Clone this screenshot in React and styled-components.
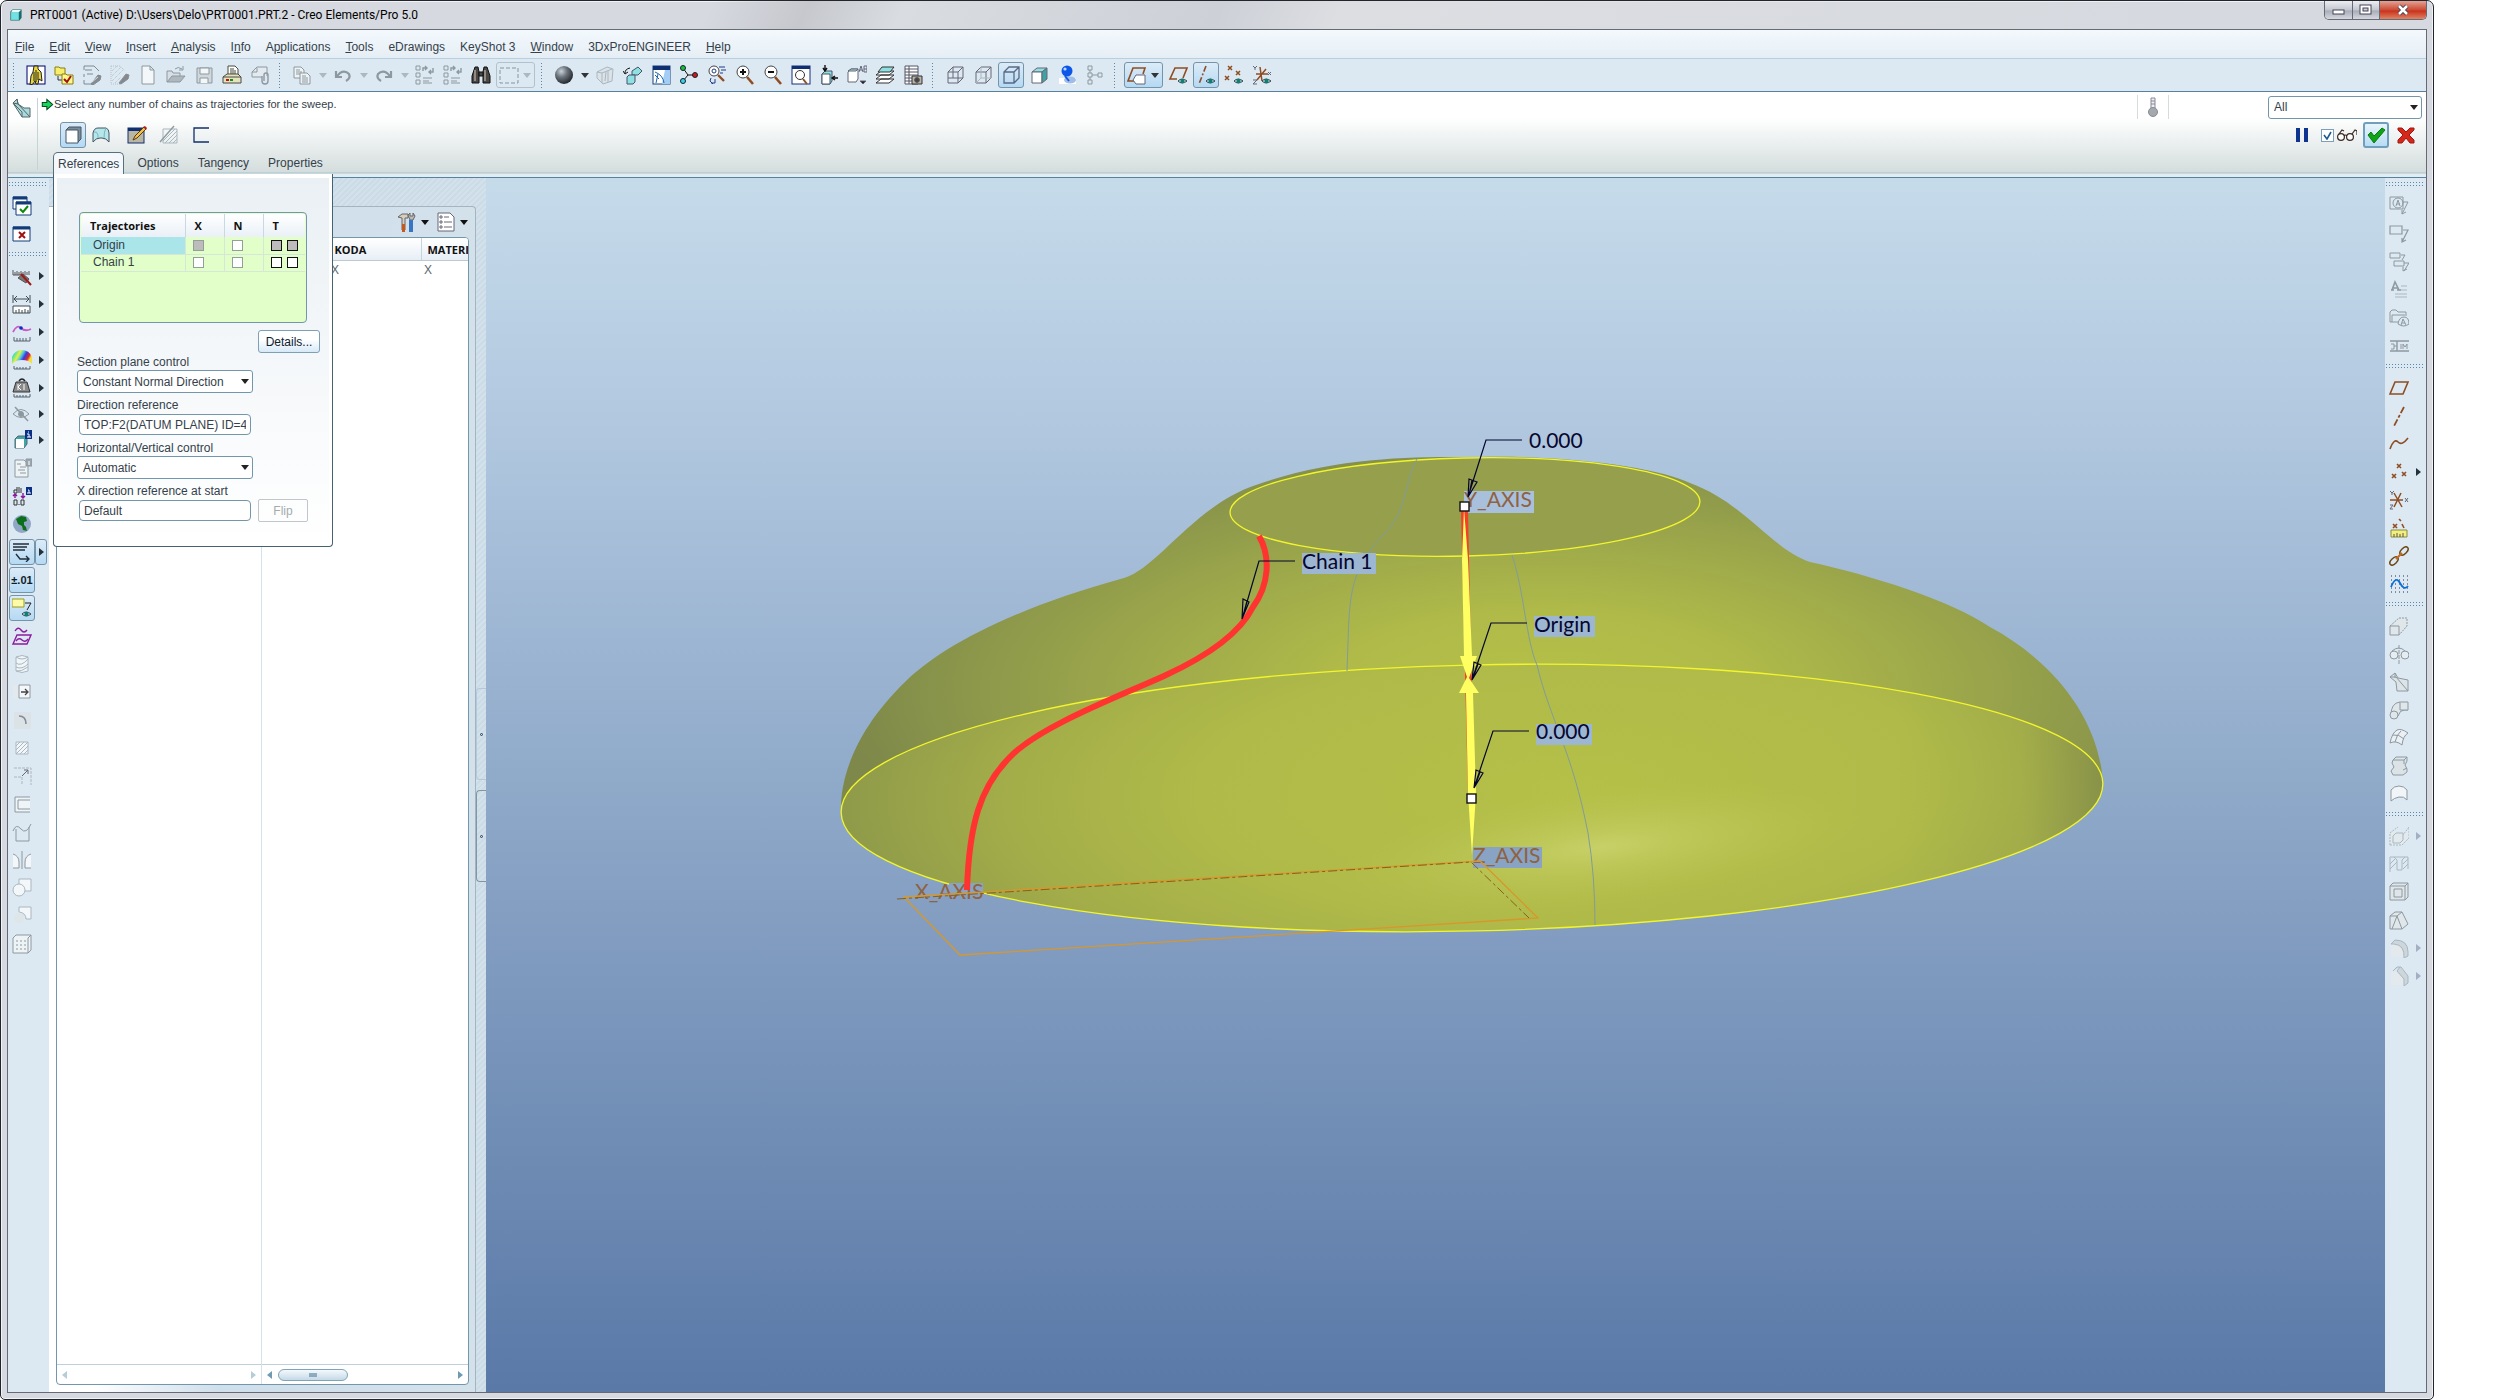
import React from 'react'
import styled, { createGlobalStyle, css } from 'styled-components'

const grey = '#8d989f'
const pale = '#a9b7c0'
const brown = '#8f4d23'
const teal = '#8fe0e2'

const eye = (
  <g>
    <path d="M10 16q4-4 9 0q-5 4-9 0z" fill="#dfe9ee" stroke="#30444c" />
    <circle cx="14.5" cy="16" r="2.2" fill="#0e7f74" />
  </g>
)

// every glyph is drawn on a 20 x 20 grid
const glyphs = {
  part: (
    <g>
      <path d="M2 5l3-3h13v12l-3 4H2z" fill="#1b6a6e" />
      <path d="M3 6h11v11H3z" fill="#73e0e2" />
      <path d="M5 3h12l-3 3H3z" fill="#e8ffff" />
    </g>
  ),
  bundle: (
    <g>
      <rect x="1" y="1" width="18" height="18" fill="#fff" stroke="#00006a" />
      <path d="M8 1h4v3l3 3 1 9-3-2-1 5h-2l-1-3-2 3-3 1 1-9 2-4z" fill="#e8d63c" stroke="#222" />
      <path d="M8 7v9M10 5v12M12 7v8" stroke="#222" />
    </g>
  ),
  folders: (
    <g stroke="#8a7d10">
      <path d="M1 2h4l1 1h5v7H1z" fill="#f7ee6b" />
      <path d="M4 11v4h4" fill="none" stroke="#333" />
      <path d="M8 9h4l1 1h6v9H8z" fill="#fff78a" />
      <path d="M10 14l3 3 4-6" fill="none" stroke="#a01010" strokeWidth="2" />
    </g>
  ),
  sheetPen: (
    <g fill="none" stroke="#7f8a92">
      <path d="M2 1h10l5 5M2 1v4M2 9v3M2 15v4h9" />
      <path d="M3 5h7M5 9h6" />
      <path d="M9 19l7-9 3 1-1 4-7 5z" fill="#868b90" />
      <path d="M10 17l6-5" stroke="#ddd" />
    </g>
  ),
  hatchPen: (
    <g fill="none" stroke="#b5c0c7">
      <path d="M1 1h9l5 5M1 1v18h9" strokeDasharray="1 1" />
      <path d="M2 6l5-5M2 11l9-9M2 16L13 5M5 18l6-6" strokeDasharray="1 1" />
      <path d="M9 18l7-9 3 1-1 4-7 5z" fill="#85898d" stroke="#858f96" />
    </g>
  ),
  blank: <path d="M4 1h8l4 4v14H4zM12 1v4h4" fill="#f3f7fa" stroke={grey} />,
  open: (
    <g stroke={grey}>
      <path d="M1 17V6h5l1 2h7v3" fill="#d7dfe4" />
      <path d="M1 17l5-6h13l-5 6z" fill="#aeb8be" />
      <path d="M9 4q3-3 7 0M17 1v4h-4" fill="none" />
    </g>
  ),
  save: (
    <g stroke={grey}>
      <path d="M3 3h15v15H3z" fill="#cfd8dd" />
      <path d="M6 3h9v6H6zM6 18v-5h8v5" fill="#f4f7f8" />
    </g>
  ),
  print: (
    <g stroke="#4b4b40">
      <path d="M6 10V1h7l3 3v6" fill="#fff" />
      <path d="M8 4h4M8 6h6M8 8h6" />
      <path d="M1 12l4-3h11l3 3v6H1z" fill="#e5e3bd" />
      <path d="M1 12h18" />
      <path d="M4 15h3" stroke="#c01010" strokeWidth="2" />
      <path d="M8 15h3" stroke="#189018" strokeWidth="2" />
    </g>
  ),
  mail: (
    <g fill="none" stroke={grey}>
      <path d="M2 12V7l5-5h10v9M2 12h10" fill="#e3ebf0" />
      <path d="M2 7h5V3" />
      <path d="M12 11v5a3 3 0 006 0v-6a2 2 0 00-4 0v6" strokeWidth="1.4" />
    </g>
  ),
  copy: (
    <g fill="#eef3f6" stroke={grey}>
      <path d="M2 2h7l3 3v8H2zM4 5h4M4 7h6M4 9h6" />
      <path d="M8 8h7l3 3v8H8zM10 11h4M10 13h6M10 15h6M10 17h6" />
    </g>
  ),
  undo: <path d="M3 6v6h6M3 12l4-4q5-3 9 1q2 4-3 7" fill="none" stroke={grey} strokeWidth="2.2" />,
  redo: <path d="M17 6v6h-6M17 12l-4-4q-5-3-9 1q-2 4 3 7" fill="none" stroke={grey} strokeWidth="2.2" />,
  regen: (
    <g fill="none" stroke={grey}>
      <path d="M1 1h4v4H1zM1 8h4v4H1zM1 15h4v4H1zM8 13h9M8 16h6M8 18h9" />
      <path d="M8 6V3h4M10 1l2 2-2 2M18 3v4h-4M16 5l-2 2 2 2" strokeWidth="1.4" />
    </g>
  ),
  find: (
    <g fill="#4a4744" stroke="#111">
      <path d="M4 2h3l1 5v11H1v-7zM16 2h-3l-1 5v11h7v-7z" />
      <path d="M8 7h4v4H8z" />
      <path d="M4 5v11M14 5v11" stroke="#d6cfc8" />
    </g>
  ),
  sphere: <circle cx="10" cy="10" r="9" fill="url(#ball)" />,
  cubeGrey: (
    <g fill="#dbe3e8" stroke={pale}>
      <path d="M2 7l10-5 6 2-1 12-9 3-6-6z" />
      <path d="M7 8l10-4M7 8v10M2 7l5 1M11 7l-1 9M13 6v11" fill="none" />
    </g>
  ),
  reorient: (
    <g>
      <path d="M9 6l6-4 4 4-4 4-6 0z" fill={teal} stroke="#456" />
      <path d="M2 8q0-4 5-5M0 6l2 3 3-2" fill="none" stroke="#111" />
      <path d="M4 12l2-2h6v7l-2 2H4z" fill={teal} stroke="#456" />
    </g>
  ),
  viewMgr: (
    <g>
      <rect x="2" y="1" width="17" height="18" fill="#fff" stroke="#16407c" />
      <path d="M2 1h17v4H2z" fill="#102f70" />
      <path d="M14 5h5v14h-8z" fill="#a3cdf4" />
      <path d="M4 7q8 3 9 11M4 10l4 4M7 9l-2 9" fill="none" stroke="#2264a8" />
    </g>
  ),
  nodes: (
    <g stroke="#123">
      <path d="M4 3l5 7-5 6M9 10h6" fill="none" stroke="#111" />
      <circle cx="4" cy="3" r="2.5" fill="#19c033" />
      <circle cx="4" cy="16" r="2.5" fill="#37d5e0" />
      <circle cx="16" cy="10" r="2.5" fill="#cf1919" />
    </g>
  ),
  layersFind: (
    <g fill="none" stroke="#1c3a86">
      <circle cx="7" cy="6" r="5" fill="#fff" stroke="#444" />
      <circle cx="7" cy="6" r="2" />
      <path d="M11 10l6 6" stroke={brown} strokeWidth="2.4" />
      <path d="M12 2h6M14 5h5M13 8h3M4 13l-1 3 3 3M8 14v4h-4" />
    </g>
  ),
  zoomIn: (
    <g fill="none" stroke="#444">
      <circle cx="8" cy="7" r="6" fill="#fff" />
      <path d="M5 7h6M8 4v6" stroke="#111" strokeWidth="2" />
      <path d="M12 12l6 7" stroke={brown} strokeWidth="2.6" />
    </g>
  ),
  zoomOut: (
    <g fill="none" stroke="#444">
      <circle cx="8" cy="7" r="6" fill="#fff" />
      <path d="M5 7h6" stroke="#111" strokeWidth="2" />
      <path d="M12 12l6 7" stroke={brown} strokeWidth="2.6" />
    </g>
  ),
  refit: (
    <g fill="none" stroke="#333">
      <rect x="1" y="1" width="18" height="18" fill="#fff" stroke="#16307c" />
      <path d="M1 1h18v3H1z" fill="#102f70" stroke="none" />
      <circle cx="9" cy="10" r="4.5" />
      <path d="M12 14l4 5" stroke={brown} strokeWidth="2" />
    </g>
  ),
  section: (
    <g stroke="#456">
      <path d="M3 9l3-3h7v10l-2 3H3z" fill={teal} />
      <path d="M3 9h8v10H3z" fill="#fff" />
      <path d="M6 0v5M4 3l2 3 2-3M19 13h-5M16 11l-3 2 3 2" fill="none" stroke="#111" strokeWidth="1.4" />
    </g>
  ),
  named: (
    <g stroke="#667">
      <path d="M1 7l3-3h7v10l-2 3H1z" fill="#fff" />
      <path d="M1 6l3-2h7l-2 2z" fill={teal} />
      <path d="M12 7l2-6 2 6M13 5h2M17 1v6h3V1zM17 4h3" fill="none" />
      <path d="M13 16h6l-3 3z" fill="#222" />
    </g>
  ),
  layers: (
    <g stroke="#333" fill="#fff">
      <path d="M1 18l5-4h13l-5 4zM1 14l5-4h13l-5 4zM1 10l5-4h13l-5 4z" />
      <path d="M3 7l4-5h12l-4 5z" fill={teal} />
    </g>
  ),
  sheet: (
    <g stroke="#556">
      <path d="M2 1h13v18H2z" fill="#fff" />
      <path d="M2 4h13M2 7h13M2 10h13M2 13h13M2 16h13M6 1v18" />
      <path d="M9 11h10v8H9z" fill="#bbb5a4" stroke="#333" />
      <circle cx="14" cy="15" r="2.4" fill="#444" />
    </g>
  ),
  wire: <path d="M3 7l5-5h10v11l-5 5H3zM3 7h10v11M13 7l5-5M8 2v11H3M8 13h10" fill="none" stroke="#667" />,
  hidden: (
    <g fill="none" stroke="#667">
      <path d="M3 7l5-5h10v11l-5 5H3zM3 7h10v11M13 7l5-5" />
      <path d="M8 2v11l-5 5M8 13h10" stroke={pale} />
    </g>
  ),
  noHidden: <path d="M3 7l5-5h10v11l-5 5H3zM3 7h10v11M13 7l5-5" fill="none" stroke="#5a6a86" strokeWidth="1.3" />,
  shaded: (
    <g stroke="#667">
      <path d="M3 7l5-4h10l-5 4z" fill={teal} />
      <path d="M3 7h10v11H3z" fill="#fff" />
      <path d="M13 7l5-4v11l-5 4z" fill="#3fa3a3" />
    </g>
  ),
  realism: (
    <g>
      <rect x="2" y="13" width="17" height="6" fill="#fff" />
      <ellipse cx="13" cy="15" rx="6" ry="3.5" fill="#9fbde6" />
      <circle cx="10" cy="6" r="5.5" fill="#0d57e8" />
      <circle cx="8" cy="4" r="1.6" fill="#bcd8ff" />
      <path d="M8 11l4 5" stroke="#0d57e8" strokeWidth="2" />
    </g>
  ),
  tree: <path d="M3 1h4v4H3zM3 8h4v4H3zM3 15h4v4H3zM13 8h4v4h-4zM7 10h6M5 5v3M5 12v3" fill="none" stroke={grey} />,
  planeTag: (
    <g fill="none" stroke={brown} strokeWidth="1.6">
      <path d="M9 16H1L6 3h12l-2 6" />
      <path d="M9 10h9v9H9l-3-4z" fill="#fff" stroke="#667" strokeWidth="1" />
    </g>
  ),
  planeEye: (
    <g>
      <path d="M9 14H2L7 3h12l-4 10" fill="none" stroke={brown} strokeWidth="1.6" />
      {eye}
    </g>
  ),
  axisEye: (
    <g>
      <path d="M10 1L3 19" stroke={brown} strokeWidth="1.6" strokeDasharray="6 2 2 2" />
      {eye}
    </g>
  ),
  pointEye: (
    <g>
      <path d="M4 1l4 4M8 1L4 5M1 11l4 4M5 11l-4 4M12 6l4 4M16 6l-4 4" stroke={brown} strokeWidth="1.5" />
      {eye}
    </g>
  ),
  csysEye: (
    <g>
      <path d="M8 2l2 14M14 4L5 15M4 9h12" stroke={brown} strokeWidth="1.5" />
      <path d="M1 1l2 2 2-2M3 3v2M16 7l3 3M19 7l-3 3M1 15h4l-4 4h4" fill="none" stroke="#667" />
      {eye}
    </g>
  ),
  sweep: (
    <g stroke="#566">
      <path d="M1 5l4-4 1 5 6 4h6v9h-8z" fill="#a9d9dc" />
      <path d="M5 1l1 5-5-1 9 9v5M6 6l12 13" fill="none" />
    </g>
  ),
  solid: (
    <g stroke="#456">
      <path d="M3 5l3-3h12v12l-3 3z" fill="#7b8f99" />
      <path d="M3 5h12v13H3z" fill="#fff" />
    </g>
  ),
  surface: (
    <g stroke="#456">
      <path d="M2 17V8q1-5 5-5h8q3 1 3 5v9q-3-4-7-4H9q-4 0-7 4z" fill="#b4e6ea" />
      <path d="M3 7q3-1 4 3v3M15 3q-2 3-2 10" fill="none" stroke="#7fb6bc" />
    </g>
  ),
  sketch: (
    <g>
      <rect x="1" y="3" width="16" height="15" fill="#b9b6a4" stroke="#102f70" />
      <path d="M1 3h16v3H1z" fill="#102f70" />
      <path d="M6 15l2-4 9-9 2 2-9 9z" fill="#f0c04a" stroke="#5a3a10" />
      <path d="M16 2l2-1 2 2-1 2z" fill="#b02020" />
    </g>
  ),
  removeMat: (
    <g fill="none" stroke={pale}>
      <path d="M4 4h14v14H4zM6 18L18 6M10 18l8-8M14 18l4-4M4 16L16 4" />
      <path d="M1 17L15 1" stroke={grey} strokeWidth="1.4" />
    </g>
  ),
  thin: <path d="M18 3H3v14h15" fill="none" stroke="#12306a" strokeWidth="1.3" />,
  winOk: (
    <g stroke="#123a78">
      <path d="M1 1h14v12H1z" fill="#fff" />
      <path d="M1 2h14" strokeWidth="3" />
      <path d="M4 6h15v13H4z" fill="#fff" />
      <path d="M4 7h15" strokeWidth="3" />
      <path d="M8 13l3 3 5-6" fill="none" stroke="#0a8a0a" strokeWidth="2" />
    </g>
  ),
  winClose: (
    <g stroke="#123a78">
      <path d="M1 3h17v14H1z" fill="#fff" />
      <path d="M1 4h17" strokeWidth="3" />
      <path d="M7 8l6 6M13 8l-6 6" stroke="#a01010" strokeWidth="2" />
    </g>
  ),
  measurePen: (
    <g fill="none" stroke="#555">
      <path d="M1 4v5h10M3 6v3M5 5v4M7 6v3M9 5v4M11 6v3M13 5v4M15 6v3M17 5v4" />
      <path d="M6 12l5-4 6 5-3 4z" fill="#777" />
      <path d="M9 8l10 11" stroke="#a01818" strokeWidth="2" />
    </g>
  ),
  distance: (
    <g fill="none" stroke="#3d4a52">
      <path d="M1 1v8M18 1v8M2 5h15M5 2L2 5l3 3M14 2l3 3-3 3" />
      <path d="M1 12h17v7H1z" fill="#fff" />
      <path d="M4 19v-3M7 19v-4M10 19v-3M13 19v-4M16 19v-3" />
    </g>
  ),
  curvature: (
    <g fill="none">
      <path d="M1 10q4-8 8-4t10 1" stroke="#c95bc6" strokeWidth="1.8" />
      <circle cx="9" cy="6" r="1.8" fill="#0b2fc8" />
      <path d="M2 15v4h16v-4M5 19v-3M8 19v-3M11 19v-3M14 19v-3" stroke="#56636b" />
    </g>
  ),
  rainbow: (
    <g>
      <path d="M0 14V7q3-7 10-7t10 7v7q-3-4-10-4T0 14z" fill="url(#hues)" />
      <path d="M2 16v3h16v-3M5 19v-2M8 19v-2M11 19v-2M14 19v-2" fill="none" stroke="#56636b" />
    </g>
  ),
  weight: (
    <g>
      <path d="M7 3q3-4 6 0" fill="none" stroke="#222" strokeWidth="1.6" />
      <path d="M4 4h11l3 10H1z" fill="#8b8b8b" stroke="#333" />
      <path d="M6 6v6M9 6L6 9l3 3M12 6v6" fill="none" stroke="#fff" />
      <path d="M2 16v3h16v-3M5 19v-2M8 19v-2M11 19v-2M14 19v-2" fill="none" stroke="#56636b" />
    </g>
  ),
  eyeOff: (
    <g fill="none" stroke={grey}>
      <path d="M1 10q8-9 16 0q-8 7-16 0z" />
      <circle cx="9" cy="10" r="2.5" fill={grey} />
      <path d="M3 3l13 14" strokeWidth="1.5" />
    </g>
  ),
  featInfo: (
    <g>
      <path d="M3 9l3-3h9v8l-3 4H3z" fill="#3fa6a6" stroke="#567" />
      <path d="M4 9h8v9H4z" fill="#fff" />
      <path d="M13 0h7v9h-7z" fill="#0a2f86" />
      <path d="M16 2h1M15 4h2v3M15 7h4" fill="none" stroke="#fff" />
    </g>
  ),
  docInfo: (
    <g fill="none" stroke={grey}>
      <path d="M3 2h9l4 4v13H3zM5 6h4M8 9h6M6 12h7M8 15h6" fill="#eef3f6" />
      <path d="M14 1h6v7h-6z" fill="#9aa6ae" />
      <path d="M17 3v4" stroke="#fff" />
    </g>
  ),
  relInfo: (
    <g fill="none" stroke="#333">
      <path d="M5 1v6H2V4h3M7 1v6M9 2v5" />
      <path d="M3 12V8M1 10l2-2 2 2M11 7v5M9 10l2 2 2-2" stroke="#8a149a" strokeWidth="1.4" />
      <path d="M2 14h3v5H2zM9 14h3v5H9zM7 18v1" />
      <path d="M14 1h6v8h-6z" fill="#0a2f86" stroke="none" />
      <path d="M16 4h1v3M15 7h4" stroke="#fff" />
    </g>
  ),
  globe: (
    <g>
      <circle cx="10" cy="10" r="9" fill="#8fa7c4" />
      <path d="M4 5l5-3 5 1 1 4-3 1v3l2 2 1 4-4-1-1-4-4-2z" fill="#0c6f1b" />
    </g>
  ),
  note: <path d="M1 2h16M1 5h14M1 8h12M4 12l4 5h8M14 14l3 3-3 3" fill="none" stroke="#222f3a" strokeWidth="1.4" />,
  tagEye: (
    <g>
      <path d="M0 1h12v8H0z" fill="#fbfba8" stroke="#9a9a20" />
      <path d="M13 5h6l-4 7" fill="none" stroke="#222" />
      {eye}
    </g>
  ),
  wrap: (
    <g fill="none" stroke="#8d1ba0" strokeWidth="1.4">
      <path d="M3 5q3-5 6-1t6 0" />
      <path d="M1 18l4-9h14l-4 9z" />
      <path d="M4 15q3-4 6-1t6-1" />
    </g>
  ),
  coil: (
    <g fill="#f0f5f8" stroke={pale}>
      <path d="M4 3q6-3 12 0v14q-6 3-12 0z" />
      <path d="M4 3q6 4 12 0M4 9q5 4 12-4M4 13q6 3 12-3M4 17q5 1 12-4" fill="none" />
    </g>
  ),
  shift: (
    <g>
      <path d="M1 3h7v13H1z" fill="#e3e9ec" />
      <path d="M7 3h11v13H7z" fill="#f4f8fa" stroke={grey} />
      <path d="M9 10h6M13 7l3 3-3 3" fill="none" stroke="#444" strokeWidth="1.3" />
    </g>
  ),
  arc: (
    <g>
      <path d="M2 2h17v17H2z" fill="#dbe3e7" />
      <path d="M7 6q7 0 7 8" fill="none" stroke="#889" strokeWidth="1.6" />
    </g>
  ),
  hatch: <path d="M4 4h12v12H4zM4 8l4-4M4 12l8-8M4 16L16 4M8 16l8-8M12 16l4-4" fill="#f3f7f9" stroke={pale} />,
  extend: (
    <g fill="none" stroke={pale}>
      <path d="M2 2h17v17M2 11h8v8" strokeDasharray="3 1" />
      <path d="M10 10l6-6M12 4h4v4" stroke="#667" />
    </g>
  ),
  offset: <path d="M18 3H3v15h15M18 6H6v9h12" fill="#eef4f7" stroke={grey} />,
  patch: <path d="M1 9q3-8 8-2t10-5M4 7v12h13V5" fill="none" stroke={grey} />,
  mirror: <path d="M10 1v18M1 4q6 2 6 8v6H1M19 4q-6 2-6 8v6h6" fill="#f3f7f9" stroke={grey} />,
  union: (
    <g fill="#f3f7f9" stroke={pale}>
      <path d="M7 1h12v12H7z" />
      <circle cx="7" cy="12" r="6" />
    </g>
  ),
  subtract: (
    <g fill="#f3f7f9" stroke={pale}>
      <path d="M7 1h12v12h-5q0-6-7-7z" />
      <circle cx="7" cy="12" r="5.5" fill="#dfe6ea" stroke="none" />
    </g>
  ),
  pattern: (
    <g fill="#eef3f6" stroke={grey}>
      <path d="M1 4l3-3h15v15l-3 3H1zM16 4v15M16 4l3-3" />
      <path d="M4 7h11M4 11h11M4 15h11" strokeDasharray="2 2" />
    </g>
  ),
  balloonNote: (
    <g fill="none" stroke={grey}>
      <path d="M1 1h13v12H1z" />
      <circle cx="9" cy="7" r="5" />
      <path d="M7 10l2-6 2 6M8 8h3M14 6h5l-6 12M13 14v4l4-2" />
    </g>
  ),
  boxNote: <path d="M1 2h12v8H1zM14 6h5l-6 12M13 14v4l4-2" fill="none" stroke={grey} strokeWidth="1.2" />,
  twoNote: <path d="M1 1h10v5H1zM12 3h4l-3 5M5 9h10v5H5zM15 11h5l-5 8M14 15v4l4-2" fill="none" stroke={grey} />,
  textA: (
    <g fill="none" stroke={grey}>
      <path d="M3 10l3-8 4 8M4 8h5M2 10h3M8 10h4" strokeWidth="1.6" />
      <path d="M12 6h6M12 10h6M6 14h12M6 17h12" stroke={pale} />
    </g>
  ),
  folderA: (
    <g fill="none" stroke={grey}>
      <path d="M1 14V4l2-2h4l2 2h8v4M1 14h8M3 14V7h13" />
      <path d="M9 16q1-7 6-7t5 7q-5 4-11 0z" fill="#dce9f3" />
      <path d="M12 17l2-6 3 6M13 15h3" />
    </g>
  ),
  tolerance: (
    <g fill="none" stroke={grey}>
      <path d="M1 5h19M1 15h19M8 5v10" strokeWidth="1.4" />
      <path d="M2 8h3v5H2M5 10h3M12 8v5M14 13V8l2 3 2-3v5" />
    </g>
  ),
  plane: <path d="M1 16L6 4h13l-5 12z" fill="none" stroke={brown} strokeWidth="1.6" />,
  axis: <path d="M15 1L5 20" fill="none" stroke={brown} strokeWidth="1.8" strokeDasharray="7 2 3 2" />,
  curve: <path d="M1 15q4-11 8-7t10-4" fill="none" stroke={brown} strokeWidth="1.6" />,
  points: <path d="M8 2l4 4M12 2L8 6M3 12l4 4M7 12l-4 4M13 10l4 4M17 10l-4 4" stroke={brown} strokeWidth="1.6" />,
  csys: (
    <g fill="none">
      <path d="M1 10h13M5 3l8 14M12 3L5 17" stroke={brown} strokeWidth="1.5" />
      <path d="M1 1l2 2 2-2M3 3v2M16 8l3 4M19 8l-3 4M1 15h3l-3 4h3" stroke="#667" />
    </g>
  ),
  refMeasure: (
    <g fill="none">
      <path d="M4 6l4 4M8 6l-4 4M10 1l2 2M13 6l2 4" stroke={brown} strokeWidth="1.6" />
      <path d="M2 12h16v7H2z" fill="#f3ef7c" stroke="#8c8a3a" />
      <path d="M5 19v-3M8 19v-4M11 19v-3M14 19v-4" stroke="#555" />
    </g>
  ),
  chain: (
    <g fill="none" stroke="#6d4a14" strokeWidth="1.5">
      <ellipse cx="5" cy="15" rx="5" ry="2.8" transform="rotate(-45 5 15)" />
      <ellipse cx="15" cy="5" rx="5" ry="2.8" transform="rotate(-45 15 5)" />
      <path d="M7 13l6-6" stroke="#c46a1c" strokeWidth="2" />
    </g>
  ),
  spline: (
    <g fill="none">
      <path d="M2 2h17M2 6h17M2 10h17M2 14h17M2 18h17" stroke="#234" strokeDasharray="1 3" />
      <path d="M2 13q5-12 9-4t8 3" stroke="#0a6fd8" strokeWidth="1.8" />
    </g>
  ),
  extrude: (
    <g fill="#e0e7ea" stroke={grey}>
      <path d="M1 10L10 2h8v8l-8 9" strokeDasharray="2 1" />
      <path d="M1 10h9v9H1z" />
    </g>
  ),
  revolve: (
    <g fill="#e6edf0" stroke={grey}>
      <circle cx="5" cy="11" r="4" />
      <circle cx="16" cy="11" r="4" />
      <path d="M10 1v19" strokeDasharray="4 1" />
      <path d="M3 7q7-6 13 0" fill="none" />
    </g>
  ),
  varSweep: <path d="M1 5l5-4 3 5 10 2v11H8l-1-9zM1 5h6l12 14M6 1v5" fill="#dde4e7" stroke={grey} />,
  swept: (
    <g fill="#e0e7ea" stroke={grey}>
      <path d="M2 15q0-12 9-13h8v8h-4q-4 0-6 6z" />
      <path d="M11 2v8h8" />
      <circle cx="5" cy="15" r="4" />
    </g>
  ),
  boundary: <path d="M1 15q2-10 7-13 4-2 11 3-5 3-6 12-6-5-12-2zM4 7q6-1 11 4M12 3q-4 3-6 11" fill="#eaf0f3" stroke={grey} />,
  blend: <path d="M4 4l3-3h11v4l-2 4 2 4v3l-4 3H4l-2-4 3-4-2-4zM4 4h11l3-3M15 4v4M14 14l4-2" fill="#dce3e7" stroke={grey} />,
  style: <path d="M2 17V6q3-4 8-4t8 4v10q-3-4-8-3t-8 4z" fill="#f1f5f8" stroke={grey} />,
  rib: (
    <g fill="#e3eaed" stroke={pale}>
      <path d="M1 19V7l8-6M1 19h12l7-7V1l-6 8" strokeDasharray="2 1" />
      <path d="M4 10l3-3h7v7l-3 3H4z" />
    </g>
  ),
  hole: <path d="M1 3h18M1 3v15M5 3l3 3v10h5V6l3-3M1 10l5-5M1 15l7-7M14 15l5-5M14 10l5-5M19 3v12" fill="none" stroke={pale} />,
  shell: <path d="M1 4l3-3h15v14l-3 3H1zM16 4v14M16 4l3-3M1 4h15M5 7h8v8H5z" fill="#dfe6ea" stroke={grey} />,
  draft: <path d="M1 19V6l5-4h7l6 12-6 5zM1 6h7l5 13M8 6l5-4M8 6L3 19" fill="#e0e7ea" stroke={grey} />,
  round: (
    <g stroke={pale}>
      <path d="M2 6h5q9 1 8 13H2z" fill="#e3e9ec" stroke="none" />
      <path d="M2 6l4-4q13 0 13 12v4l-4 2q1-13-10-14z" fill="#ccd6db" />
    </g>
  ),
  chamfer: (
    <g stroke={pale}>
      <path d="M2 6h6l7 7v6H2z" fill="#e3e9ec" stroke="none" />
      <path d="M4 5l4-4h4l7 9v7l-4 3v-7L8 5l3-4" fill="#ccd6db" />
    </g>
  ),
  tools: (
    <g>
      <path d="M1 5l4-3h6v4H8v12H5V6z" fill="#d7cdbd" stroke="#666" />
      <path d="M5 12h3v8H5z" fill="#c9581d" />
      <path d="M13 8l-2-5 2-2v3h3V1l2 3-2 4z" fill="#bbb" stroke="#666" />
      <path d="M12 8h4v12h-4z" fill="#3776c4" />
    </g>
  ),
  list: (
    <g stroke="#667">
      <path d="M2 1h12l4 4v14H2z" fill="#fff" />
      <path d="M8 5h5M8 10h8M8 15h8" />
      <path d="M4 4h2v2H4zM4 9h2v2H4zM4 14h2v2H4z" fill="none" />
    </g>
  ),
  gauge: (
    <g stroke="#889">
      <path d="M8 1h4v11H8z" fill="#eee" />
      <path d="M8 4h4M8 7h4" />
      <circle cx="10" cy="15" r="4.5" fill="#a4a9ac" />
    </g>
  ),
  pause: <path d="M4 3h4v14H4zM12 3h4v14h-4z" fill="#0d3590" />,
  glasses: (
    <g fill="none" stroke="#3a2a22" strokeWidth="1.2">
      <circle cx="4" cy="12" r="3.4" fill="#fff" />
      <circle cx="13" cy="12" r="3.4" fill="#fff" />
      <path d="M7 11q1-2 3 0M2 9l3-4 2 1M15 9l3-4 2 1v4" />
    </g>
  ),
  accept: <path d="M2 10l3-3 3 4 8-8 3 2L8 18z" fill="#0fa316" stroke="#0a7a10" />,
  reject: <path d="M2 3h4l4 4 4-4h4v2l-5 5 5 5v3h-4l-4-5-4 5H2v-3l5-5-5-5z" fill="#d5281b" stroke="#a11810" />,
  arrow: <path d="M2 7h7V2l9 8-9 8v-5H2z" fill="#19d45f" stroke="#064d1f" strokeWidth="1.6" />
}

const Icon = ({ name, size = 20 }) => (
  <svg width={size} height={size} viewBox="0 0 20 20" aria-hidden="true">
    {glyphs[name]}
  </svg>
)

const menus = [
  ['', 'F', 'ile'],
  ['', 'E', 'dit'],
  ['', 'V', 'iew'],
  ['', 'I', 'nsert'],
  ['', 'A', 'nalysis'],
  ['I', 'n', 'fo'],
  ['A', 'p', 'plications'],
  ['', 'T', 'ools'],
  ['eDrawin', 'g', 's'],
  ['KeyShot 3', '', ''],
  ['', 'W', 'indow'],
  ['3DxProENGINEER', '', ''],
  ['', 'H', 'elp']
]

// '|' is a grip, '>' a drop-down arrow that follows its button
const toolbar = [
  '|', 'bundle', 'folders', 'sheetPen', 'hatchPen', 'blank', 'open', 'save', 'print', 'mail',
  '|', 'copy', '>', 'undo', '>', 'redo', '>', 'regen', 'regen', 'find', 'select',
  '|', 'sphere', '>dark', 'cubeGrey', 'reorient', 'viewMgr', 'nodes', 'layersFind', 'zoomIn', 'zoomOut',
  'refit', 'section', 'named', 'layers', 'sheet',
  '|', 'wire', 'hidden', '*noHidden', 'shaded', 'realism', 'tree',
  '|', 'split', 'planeEye', '*axisEye', 'pointEye', 'csysEye'
]

const leftTools = [
  '|', 'winOk', 'winClose', '|',
  'measurePen>', 'distance>', 'curvature>', 'rainbow>', 'weight>', 'eyeOff>', 'featInfo>',
  'docInfo', 'relInfo', 'globe', '*note>', '*tol', '*tagEye', 'wrap', 'coil', 'shift', 'arc',
  'hatch', 'extend', 'offset', 'patch', 'mirror', 'union', 'subtract', 'pattern'
]

const rightTools = [
  '|', 'balloonNote', 'boxNote', 'twoNote', 'textA', 'folderA', 'tolerance', '|',
  'plane', 'axis', 'curve', 'points>', 'csys', 'refMeasure', 'chain', 'spline', '|',
  'extrude', 'revolve', 'varSweep', 'swept', 'boundary', 'blend', 'style', '|',
  'rib>', 'hole', 'shell', 'draft', 'round>', 'chamfer>'
]

const TopTool = ({ item }) => {
  if (item === '|') return <Grip />
  if (item[0] === '>')
    return (
      <Drop aria-label="More">
        <Caret $color={item === '>dark' ? '#333' : '#a9b8c2'} />
      </Drop>
    )
  if (item === 'select')
    return (
      <Split aria-label="Selection box">
        <svg width="20" height="20" viewBox="0 0 20 20">
          <rect x="1" y="3" width="18" height="15" fill="none" stroke="#8496a2" strokeDasharray="4 2" />
        </svg>
        <Caret $color="#a9b8c2" />
      </Split>
    )
  if (item === 'split')
    return (
      <Split $on aria-label="Plane tags">
        <Icon name="planeTag" />
        <Caret $color="#333" />
      </Split>
    )
  const name = item.replace('*', '')
  return (
    <Tool $on={item[0] === '*'} aria-label={name}>
      <Icon name={name} />
    </Tool>
  )
}

const SideTool = ({ item, right }) => {
  if (item === '|') return <SideGrip />
  const on = item[0] === '*'
  const more = item.endsWith('>')
  const name = item.replace(/[*>]/g, '')
  const faded = right && name !== 'points'
  return (
    <SideRow $short={name === 'eyeOff'}>
      <Tool $on={on} aria-label={name}>
        {name === 'tol' ? <Tol>±.01</Tol> : <Icon name={name} />}
      </Tool>
      {more && (
        <More $on={on} aria-label={`${name} options`}>
          <Side $color={faded ? '#a3afc2' : '#24303a'} />
        </More>
      )}
    </SideRow>
  )
}

const Scene = () => (
  <SceneSvg viewBox="486 178 1899 1214" role="img" aria-label="Swept surface model">
    <defs>
      <radialGradient id="outer" gradientUnits="userSpaceOnUse" cx="0" cy="0" r="1" gradientTransform="translate(1540 690) scale(700 262)">
        <stop offset="0" stopColor="#b6c148" />
        <stop offset=".3" stopColor="#afba49" />
        <stop offset=".6" stopColor="#9ca74b" />
        <stop offset=".82" stopColor="#8c974b" />
        <stop offset="1" stopColor="#7d884a" />
      </radialGradient>
      <radialGradient id="inner" gradientUnits="userSpaceOnUse" cx="0" cy="0" r="1" gradientTransform="translate(1570 790) scale(740 270)">
        <stop offset="0" stopColor="#b5c048" />
        <stop offset=".5" stopColor="#afba49" />
        <stop offset=".75" stopColor="#a4ae49" />
        <stop offset="1" stopColor="#8e994a" />
      </radialGradient>
      <linearGradient id="rightFade" gradientUnits="userSpaceOnUse" x1="1900" y1="0" x2="2103" y2="0">
        <stop offset="0" stopColor="#8b964a" stopOpacity="0" />
        <stop offset=".6" stopColor="#8b964a" stopOpacity=".2" />
        <stop offset="1" stopColor="#858f49" stopOpacity=".9" />
      </linearGradient>
      <radialGradient id="glow" gradientUnits="userSpaceOnUse" cx="0" cy="0" r="1" gradientTransform="translate(1600 850) rotate(-5) scale(270 62)">
        <stop offset="0" stopColor="#ccd56f" stopOpacity=".8" />
        <stop offset=".5" stopColor="#c3cc5e" stopOpacity=".4" />
        <stop offset="1" stopColor="#b9c44b" stopOpacity="0" />
      </radialGradient>
    </defs>
    <path
      d="M841 812C840 785 850 735 906 681C936 652 1000 612 1124 578C1158 568 1195 505 1256 485C1340 455 1420 457 1480 457C1570 455 1660 468 1690 483C1745 503 1770 548 1810 562C1870 575 1950 600 1990 627C2060 665 2100 725 2103 784C2000 900 1000 900 841 812z"
      fill="url(#outer)"
    />
    <ellipse cx="1472" cy="798" rx="631" ry="133" transform="rotate(-1.33 1472 798)" fill="url(#inner)" />
    <ellipse cx="1472" cy="798" rx="631" ry="133" transform="rotate(-1.33 1472 798)" fill="url(#rightFade)" />
    <ellipse cx="1472" cy="798" rx="631" ry="133" transform="rotate(-1.33 1472 798)" fill="url(#glow)" stroke="#f2f52e" strokeWidth="1.3" />
    <ellipse cx="1465" cy="507" rx="235" ry="49" transform="rotate(-1.35 1465 507)" fill="#959f4c" stroke="#f2f52e" strokeWidth="1.3" />
    <g fill="none" stroke="#829c9a">
      <path d="M1417 459C1405 480 1408 505 1388 530C1345 572 1350 600 1347 671" />
      <path d="M1512 555C1524 590 1526 640 1537 665C1550 720 1572 750 1588 833Q1595 875 1595 925" />
    </g>
    <g fontSize="21">
      <rect x="1464" y="491" width="70" height="22" fill="#a8c0dc" />
      <rect x="1473" y="847" width="69" height="21" fill="#88a3c4" />
      <rect x="949" y="883" width="34" height="10" fill="#88a3c4" />
      <g fill="#8f6240">
        <text x="1464" y="507">Y_AXIS</text>
        <text x="1473" y="863">Z_AXIS</text>
        <text x="915" y="899">X_AXIS</text>
      </g>
    </g>
    <g fill="none">
      <path d="M904 897L1480 861L1538 918L960 955z" stroke="#d8972c" strokeWidth="1.3" />
      <path d="M897 899L1471 862L1529 918" stroke="#86601e" strokeDasharray="9 3 3 3" />
      <path
        d="M1259 536C1271 557 1269 585 1253 607C1238 637 1199 660 1164 676C1120 696 1040 726 1010 757C980 787 969 825 967 890"
        stroke="#ff3430"
        strokeWidth="6"
      />
    </g>
    <path d="M1461 510h7L1474 796h-6z" fill="#f2402a" />
    <path d="M1464 508L1462 560L1464 656h-4L1467 677L1459 693h7L1468 794L1472 855L1476 794L1473 693h6L1469 678L1477 656h-5L1468 560z" fill="#ffff62" />
    <g fill="#fff" stroke="#111" strokeWidth="1.4">
      <rect x="1460" y="502" width="9" height="9" />
      <rect x="1467" y="794" width="9" height="9" />
    </g>
    <g fill="none" stroke="#05052c" strokeWidth="1.2">
      <path d="M1522 440h-36L1468 497M1477 482l-8-3-1 18zM1472 480l-3 15" />
      <path d="M1295 561h-36L1242 619M1249 602l-6-3-1 20zM1247 601l-4 15" />
      <path d="M1527 623h-36L1472 680M1481 665l-7-3-2 18zM1478 664l-5 14" />
      <path d="M1529 731h-36L1474 788M1483 773l-7-3-2 18zM1480 772l-5 14" />
    </g>
    <g fill="#9db6d2">
      <rect x="1302" y="553" width="74" height="21" />
      <rect x="1534" y="616" width="61" height="21" />
      <rect x="1536" y="724" width="56" height="21" />
    </g>
    <g fontSize="21" fill="#06062e">
      <text x="1529" y="448">0.000</text>
      <text x="1302" y="569">Chain 1</text>
      <text x="1534" y="632">Origin</text>
      <text x="1536" y="739">0.000</text>
    </g>
  </SceneSvg>
)

const ReferencesPopup = () => (
  <Popup>
    <PopupBody>
      <TrajFrame>
        <TrajTable>
          <thead>
            <tr>
              <th>Trajectories</th>
              <th>X</th>
              <th>N</th>
              <th>T</th>
            </tr>
          </thead>
          <tbody>
            <tr>
              <TrajName $on>Origin</TrajName>
              <td><Box $grey disabled aria-label="Origin X" /></td>
              <td><Box aria-label="Origin N" /></td>
              <td>
                <Pair>
                  <Box $grey $dark aria-label="Origin T start" />
                  <Box $grey $dark aria-label="Origin T end" />
                </Pair>
              </td>
            </tr>
            <tr>
              <TrajName>Chain 1</TrajName>
              <td><Box aria-label="Chain 1 X" /></td>
              <td><Box aria-label="Chain 1 N" /></td>
              <td>
                <Pair>
                  <Box $dark aria-label="Chain 1 T start" />
                  <Box $dark aria-label="Chain 1 T end" />
                </Pair>
              </td>
            </tr>
          </tbody>
        </TrajTable>
      </TrajFrame>
      <Details>Details...</Details>
      <Fields>
        <Field>
          <label htmlFor="plane">Section plane control</label>
          <SelectWrap>
            <select id="plane"><option>Constant Normal Direction</option></select>
            <Caret $color="#222" />
          </SelectWrap>
        </Field>
        <Field>
          <label htmlFor="direction">Direction reference</label>
          <Collector id="direction" defaultValue="TOP:F2(DATUM PLANE) ID=4" />
        </Field>
        <Field>
          <label htmlFor="hv">Horizontal/Vertical control</label>
          <SelectWrap>
            <select id="hv"><option>Automatic</option></select>
            <Caret $color="#222" />
          </SelectWrap>
        </Field>
        <Field>
          <label htmlFor="start">X direction reference at start</label>
          <FlipRow>
            <Collector id="start" defaultValue="Default" />
            <Flip disabled>Flip</Flip>
          </FlipRow>
        </Field>
      </Fields>
    </PopupBody>
  </Popup>
)

const Dashboard = () => (
  <Dash>
    <DashLeft>
      <Icon name="sweep" />
    </DashLeft>
    <DashMain>
      <Message>
        <Icon name="arrow" size={13} />
        Select any number of chains as trajectories for the sweep.
      </Message>
      <DashTools>
        <Tool $on aria-label="Solid"><Icon name="solid" /></Tool>
        <Tool aria-label="Surface"><Icon name="surface" /></Tool>
        <ToolGap $wide />
        <Tool aria-label="Sketch"><Icon name="sketch" /></Tool>
        <ToolGap />
        <Tool aria-label="Remove material"><Icon name="removeMat" /></Tool>
        <ToolGap />
        <Tool aria-label="Thin"><Icon name="thin" /></Tool>
      </DashTools>
      <Tabs>
        <Tab $active>References</Tab>
        <Tab>Options</Tab>
        <Tab>Tangency</Tab>
        <Tab>Properties</Tab>
      </Tabs>
    </DashMain>
    <DashRight>
      <FilterRow>
        <Gauge><Icon name="gauge" /></Gauge>
        <SelectWrap $wide>
          <select aria-label="Filter"><option>All</option></select>
          <Caret $color="#222" />
        </SelectWrap>
      </FilterRow>
      <ConfirmRow>
        <Tool aria-label="Pause"><Icon name="pause" /></Tool>
        <Preview>
          <input type="checkbox" defaultChecked aria-label="Preview" />
          <svg width="9" height="9" viewBox="0 0 9 9"><path d="M1 4l3 4 4-7" fill="none" stroke="#1c5a94" strokeWidth="1.6" /></svg>
        </Preview>
        <Icon name="glasses" />
        <Accept aria-label="Accept"><Icon name="accept" /></Accept>
        <Tool aria-label="Cancel"><Icon name="reject" /></Tool>
      </ConfirmRow>
    </DashRight>
    <ReferencesPopup />
  </Dash>
)

const ModelTree = () => (
  <SidePanel>
    <TreeBox>
      <TreeTools>
        <button aria-label="Settings"><Icon name="tools" /><Caret $color="#111" /></button>
        <button aria-label="Show"><Icon name="list" /><Caret $color="#111" /></button>
      </TreeTools>
      <Tree>
        <TreePane>
          <TreeFill />
          <Scroll>
            <Side $flip $color="#b5cdd6" />
            <Track />
            <Side $color="#b5cdd6" />
          </Scroll>
        </TreePane>
        <ColumnPane>
          <Columns>
            <thead>
              <tr><th /><th>KODA</th><th>MATERI</th></tr>
            </thead>
            <tbody>
              <tr><td /><td>X</td><td>X</td></tr>
            </tbody>
          </Columns>
          <TreeFill />
          <Scroll>
            <Side $flip $color="#6d9cb2" />
            <Track>
              <Thumb>
                <svg width="8" height="4" viewBox="0 0 8 4"><path d="M1 0v4M3 0v4M5 0v4M7 0v4" stroke="#3d6f8c" /></svg>
              </Thumb>
            </Track>
            <Side $color="#6d9cb2" />
          </Scroll>
        </ColumnPane>
      </Tree>
    </TreeBox>
    <Rail>
      <Handle aria-label="Collapse tree"><i /></Handle>
      <Handle $dark aria-label="Collapse panel"><i /></Handle>
    </Rail>
  </SidePanel>
)

const App = () => (
  <Page>
    <GlobalStyle />
    <Defs aria-hidden="true">
      <defs>
        <radialGradient id="ball" cx=".35" cy=".3" r=".8">
          <stop offset="0" stopColor="#c9d2da" />
          <stop offset=".4" stopColor="#6c747c" />
          <stop offset="1" stopColor="#15191d" />
        </radialGradient>
        <linearGradient id="hues" x2="1" y2=".4">
          <stop offset="0" stopColor="#1f7fd0" />
          <stop offset=".2" stopColor="#49e0b0" />
          <stop offset=".4" stopColor="#e8f03c" />
          <stop offset=".55" stopColor="#49c8e0" />
          <stop offset=".7" stopColor="#3a3be0" />
          <stop offset=".88" stopColor="#e02a2a" />
          <stop offset="1" stopColor="#f0e040" />
        </linearGradient>
      </defs>
    </Defs>
    <Window>
      <TitleBar>
        <Icon name="part" size={14} />
        <Title>PRT0001 (Active) D:\Users\Delo\PRT0001.PRT.2 - Creo Elements/Pro 5.0</Title>
        <WinButtons>
          <WinButton aria-label="Minimize">
            <svg width="14" height="14" viewBox="0 0 14 14"><rect x="1" y="7" width="11" height="4" fill="#fff" stroke="#445" /></svg>
          </WinButton>
          <WinButton aria-label="Restore">
            <svg width="14" height="14" viewBox="0 0 14 14">
              <rect x="1" y="2" width="11" height="9" fill="#fff" stroke="#445" />
              <rect x="4" y="5" width="5" height="3" fill="#ccd" stroke="#445" />
            </svg>
          </WinButton>
          <WinButton $close aria-label="Close">
            <svg width="14" height="14" viewBox="0 0 14 14">
              <path d="M3 3l8 8M11 3l-8 8" stroke="#445" strokeWidth="4.5" />
              <path d="M3 3l8 8M11 3l-8 8" stroke="#fff" strokeWidth="2.5" />
            </svg>
          </WinButton>
        </WinButtons>
      </TitleBar>
      <Client>
        <MenuBar>
          {menus.map(([before, key, after]) => (
            <MenuItem key={before + key + after}>
              {before}<u>{key}</u>{after}
            </MenuItem>
          ))}
        </MenuBar>
        <ToolBar>
          {toolbar.map((item, i) => <TopTool key={i} item={item} />)}
        </ToolBar>
        <Dashboard />
        <Main>
          <SideBar>
            {leftTools.map((item, i) => <SideTool key={i} item={item} />)}
          </SideBar>
          <ModelTree />
          <Viewport><Scene /></Viewport>
          <SideBar>
            {rightTools.map((item, i) => <SideTool key={i} item={item} right />)}
          </SideBar>
        </Main>
      </Client>
    </Window>
  </Page>
)

export default App

const GlobalStyle = createGlobalStyle`
  * {
    box-sizing: border-box;
  }
  body {
    margin: 0;
    background: #fff;
    color: #34414b;
    font: 12px/16px 'Liberation Sans', Arial, sans-serif;
  }
  button, input, select {
    font: inherit;
    color: inherit;
    margin: 0;
    padding: 0;
  }
  button {
    border: 0;
    background: none;
  }
  svg {
    display: block;
    flex: none;
  }
`
const pressed = css`
  border: 1px solid #7394a9;
  border-radius: 3px;
  background: linear-gradient(#dcebf7, #b5d9f4);
`
const stripes = 'repeating-linear-gradient(135deg, #d3e1eb 0 2px, #cbdce8 2px 4px)'

const Page = styled.div`
  display: flex;
  min-height: 100vh;
  padding-right: 81px;
`
const Defs = styled.svg`
  position: absolute;
  width: 0;
  height: 0;
`
const Window = styled.div`
  flex: 1;
  min-width: 0;
  display: flex;
  flex-direction: column;
  padding: 0 6px 6px;
  border: 1px solid #22262c;
  border-radius: 7px 7px 5px 5px;
  background: #d6d9df;
  box-shadow: inset 0 0 0 1px #f2f3f6;
`
const TitleBar = styled.header`
  display: flex;
  align-items: center;
  gap: 7px;
  height: 28px;
  padding-left: 2px;
  background: linear-gradient(115deg, transparent 0 29%, #c6c8ce 33%, #d9dde1 37%, #cdd0d7 50%, #dcdee2 55%, transparent 90%);
`
const Title = styled.div`
  flex: 1;
  color: #000;
  font: 12px/16px Roboto, 'Noto Sans', sans-serif;
`
const WinButtons = styled.div`
  display: flex;
  align-self: flex-start;
  border: 1px solid #666a75;
  border-top: 0;
  border-radius: 0 0 5px 5px;
  overflow: hidden;
`
const WinButton = styled.button`
  display: grid;
  place-items: center;
  width: ${({ $close }) => ($close ? 47 : 27)}px;
  height: 18px;
  background: ${({ $close }) =>
    $close ? 'linear-gradient(#e5a294, #cb4a34 50%, #c9321a 55%, #de8465)' : 'linear-gradient(#eceef2, #c3c6cf 50%, #a9adb9 55%, #d5d8df)'};
  & + & {
    border-left: 1px solid #666a75;
  }
`
const Client = styled.div`
  flex: 1;
  display: flex;
  flex-direction: column;
  border: 1px solid #666b73;
`
const MenuBar = styled.nav`
  display: flex;
  align-items: center;
  gap: 15px;
  height: 29px;
  padding: 5px 7px 0;
  border-bottom: 1px solid #b7cfdf;
  background: linear-gradient(#f3f9fd, #e6eef5);
`
const MenuItem = styled.button`
  line-height: 16px;
  white-space: nowrap;
`
const ToolBar = styled.div`
  display: flex;
  align-items: center;
  height: 33px;
  border-bottom: 1px solid #5582a0;
  background: #dce9f3;
`
const Grip = styled.span`
  width: 14px;
  height: 27px;
  background: radial-gradient(circle, #5c87a8 0 1px, transparent 1px) 4px 0 / 3px 3px;
  background-clip: content-box;
  padding: 0 6px 0 4px;
`
const Tool = styled.button`
  display: grid;
  place-items: center;
  width: 26px;
  height: 26px;
  margin: 0 1px;
  flex: none;
  ${({ $on }) => $on && pressed}
`
const Drop = styled.button`
  display: grid;
  place-items: center;
  width: 13px;
  height: 26px;
`
const Split = styled.button`
  display: flex;
  align-items: center;
  justify-content: space-between;
  width: 39px;
  height: 26px;
  margin: 0 1px;
  padding: 0 3px 0 2px;
  border: 1px solid #b2c2cd;
  border-radius: 3px;
  ${({ $on }) => $on && pressed}
`
const Caret = styled.i`
  width: 0;
  height: 0;
  border: 4px solid transparent;
  border-top: 5px solid ${({ $color }) => $color};
  border-bottom: 0;
`
const Side = styled.i`
  width: 0;
  height: 0;
  border: 4px solid transparent;
  ${({ $flip, $color }) => ($flip ? `border-right: 5px solid ${$color}; border-left: 0;` : `border-left: 5px solid ${$color}; border-right: 0;`)}
`
const Dash = styled.section`
  position: relative;
  z-index: 1;
  display: flex;
  height: 86px;
  border-bottom: 1px solid #5582a0;
  background: linear-gradient(#fff 30%, #d4dddd 80px, #aac2cc 81px, #e3edf1 82px);
`
const DashLeft = styled.div`
  width: 30px;
  height: 72px;
  margin-top: 6px;
  padding-left: 4px;
  border-right: 1px solid #c5d2d6;
`
const DashMain = styled.div`
  flex: 1;
  display: flex;
  flex-direction: column;
  padding-left: 3px;
`
const Message = styled.p`
  display: flex;
  align-items: center;
  height: 24px;
  margin: 0;
  font-size: 11px;
`
const DashTools = styled.div`
  display: flex;
  align-items: center;
  height: 34px;
  margin-top: 2px;
  padding-left: 18px;
`
const ToolGap = styled.span`
  width: ${({ $wide }) => ($wide ? 8 : 4)}px;
`
const Tabs = styled.div`
  display: flex;
  height: 24px;
  padding-left: 12px;
`
const Tab = styled.button`
  height: 22px;
  padding: 0 ${({ $active }) => ($active ? 4 : 9)}px;
  margin-right: 1px;
  ${({ $active }) =>
    $active &&
    css`
      margin-right: 4px;
      border: 1px solid #55707f;
      border-bottom: 0;
      border-radius: 5px 5px 0 0;
      background: #f5f8fa;
    `}
`
const DashRight = styled.div`
  display: flex;
  flex-direction: column;
  align-items: flex-end;
`
const FilterRow = styled.div`
  display: flex;
  align-items: center;
  gap: 99px;
  height: 30px;
  padding-right: 4px;
`
const Gauge = styled.span`
  padding: 2px 5px;
  border: solid #d5dbde;
  border-width: 0 1px;
`
const ConfirmRow = styled.div`
  display: flex;
  align-items: center;
  height: 26px;
  padding-right: 6px;
`
const Preview = styled.span`
  position: relative;
  width: 13px;
  height: 13px;
  margin: 0 3px 0 5px;
  input {
    display: block;
    appearance: none;
    width: 13px;
    height: 13px;
    border: 1px solid #7ba0b7;
    background: #fff;
  }
  svg {
    position: absolute;
    inset: 2px;
    pointer-events: none;
  }
`
const Accept = styled(Tool)`
  border: 2px solid #6f9fbd;
  border-radius: 3px;
  background: linear-gradient(#e9f4fb, #b7dcf5);
  margin: 0 3px 0 6px;
`
const Popup = styled.div`
  position: absolute;
  top: 82px;
  left: 45px;
  width: 280px;
  padding: 4px 3px 3px;
  border: 1px solid #456273;
  border-top: 0;
  border-radius: 0 0 4px 4px;
  background: #fff;
`
const PopupBody = styled.div`
  display: flex;
  flex-direction: column;
  padding: 34px 9px 21px 22px;
  background: linear-gradient(#eaf0f4, #fff);
`
const TrajFrame = styled.div`
  width: 228px;
  height: 111px;
  padding: 1px;
  border: 1px solid #7296ab;
  border-radius: 4px;
  background: #e2ffc9;
`
const TrajTable = styled.table`
  width: 100%;
  table-layout: fixed;
  border-collapse: collapse;
  th {
    width: 39px;
    height: 23px;
    padding: 0 0 0 9px;
    border-right: 1px solid #c9d8e3;
    background: linear-gradient(#fff, #e9f0f6);
    color: #111;
    font: bold 11px/16px 'Open Sans', sans-serif;
    text-align: left;
  }
  th:first-child {
    width: 104px;
  }
  th:last-child {
    width: auto;
  }
  td {
    height: 17px;
    padding: 0 7px;
    border: solid #d5e8d8;
    border-width: 0 1px 1px 0;
  }
  th:last-child,
  td:last-child {
    border-right: 0;
  }
`
const TrajName = styled.td`
  && {
    padding: 0 12px;
    background: ${({ $on }) => ($on ? '#aae5ea' : 'none')};
    line-height: 15px;
  }
`
const Pair = styled.span`
  display: flex;
  gap: 5px;
`
const Box = styled.input.attrs({ type: 'checkbox' })`
  display: block;
  appearance: none;
  width: 11px;
  height: 11px;
  flex: none;
  border: 1px solid ${({ $dark }) => ($dark ? '#111' : '#93a09a')};
  background: ${({ $grey }) => ($grey ? '#bcbcbc' : '#fff')};
`
const Details = styled.button`
  align-self: flex-end;
  width: 62px;
  height: 23px;
  margin: 7px 0 1px;
  border: 1px solid #7da0b5;
  border-radius: 3px;
  background: linear-gradient(#fff 40%, #d7e9f7);
  color: #10202c;
`
const Fields = styled.div`
  display: grid;
  gap: 4px;
  margin-left: -2px;
`
const Field = styled.div`
  display: flex;
  flex-direction: column;
`
const SelectWrap = styled.div`
  position: relative;
  width: ${({ $wide }) => ($wide ? 154 : 176)}px;
  select {
    display: block;
    appearance: none;
    width: 100%;
    height: 23px;
    padding: 0 5px;
    border: 1px solid #7296ab;
    border-radius: 3px;
    background: #fff;
  }
  i {
    position: absolute;
    top: 9px;
    right: 4px;
    pointer-events: none;
  }
`
const Collector = styled.input`
  width: 172px;
  height: 21px;
  margin: 1px 2px;
  padding: 0 4px;
  border: 1px solid #7296ab;
  border-radius: 4px;
  background: #fff;
`
const FlipRow = styled.div`
  display: flex;
  gap: 5px;
`
const Flip = styled.button`
  width: 50px;
  height: 23px;
  border: 1px solid #c0c6ca;
  border-radius: 2px;
  color: #a5abae;
`
const Main = styled.main`
  flex: 1;
  display: flex;
`
const SideBar = styled.aside`
  width: 41px;
  flex: none;
  background: #dce9f3;
`
const SideGrip = styled.div`
  height: 14px;
  padding: 3px 1px 5px;
  background: radial-gradient(circle, #5c87a8 0 1px, transparent 1px) 0 0 / 3px 3px;
  background-clip: content-box;
`
const SideRow = styled.div`
  display: flex;
  align-items: center;
  height: ${({ $short }) => ($short ? 24 : 28)}px;
`
const More = styled.button`
  display: grid;
  place-items: center;
  width: 12px;
  height: 26px;
  margin-left: -1px;
  ${({ $on }) => $on && pressed}
`
const Tol = styled.b`
  font-size: 11px;
  color: #111d26;
`
const SidePanel = styled.section`
  display: flex;
  width: 437px;
  flex: none;
  background: ${stripes};
`
const TreeBox = styled.div`
  flex: 1;
  display: flex;
  flex-direction: column;
  min-width: 0;
  margin-top: 28px;
  padding: 0 6px 7px 7px;
  border: solid #a4b5c0;
  border-width: 1px 1px 0 0;
  border-radius: 0 4px 0 0;
  background: linear-gradient(to right, #fff 10%, #cfdfeb 40%, #d3e1eb);
`
const TreeTools = styled.div`
  display: flex;
  justify-content: flex-end;
  align-items: center;
  gap: 9px;
  height: 30px;
  padding-right: 3px;
  button {
    display: flex;
    align-items: center;
    gap: 4px;
    width: 30px;
  }
`
const Tree = styled.div`
  flex: 1;
  display: flex;
  border: 1px solid #7296ab;
  border-radius: 4px;
  background: #fff;
  overflow: hidden;
`
const TreePane = styled.div`
  display: flex;
  flex-direction: column;
  width: 205px;
  border-right: 1px solid #d5e2ea;
`
const ColumnPane = styled.div`
  flex: 1;
  display: flex;
  flex-direction: column;
  min-width: 0;
  overflow: hidden;
`
const Columns = styled.table`
  width: 100%;
  table-layout: fixed;
  border-collapse: collapse;
  th,
  td {
    padding: 0 0 0 3px;
    text-align: left;
    font-weight: normal;
  }
  th {
    height: 22px;
    padding: 2px 0 0 6px;
    border-right: 1px solid #c5d5e0;
    border-bottom: 1px solid #b9cad6;
    background: linear-gradient(#fff, #e6eef5);
    color: #111;
    font: bold 11px/16px 'Open Sans', sans-serif;
  }
  th:nth-child(1) {
    width: 66px;
  }
  th:nth-child(2) {
    width: 93px;
  }
  th:nth-child(3) {
    border-right: 0;
  }
  td {
    height: 19px;
    color: #5c666e;
  }
`
const TreeFill = styled.div`
  flex: 1;
`
const Scroll = styled.div`
  display: flex;
  align-items: center;
  gap: 6px;
  height: 20px;
  padding: 0 5px;
  border-top: 1px solid #bdd0dc;
`
const Track = styled.span`
  flex: 1;
`
const Thumb = styled.span`
  display: grid;
  place-items: center;
  width: 70px;
  height: 12px;
  border: 1px solid #7fa3b8;
  border-radius: 6px;
  background: linear-gradient(#f4f9fc, #c5d9e7);
`
const Rail = styled.div`
  display: flex;
  flex-direction: column;
  justify-content: center;
  gap: 10px;
  width: 10px;
`
const Handle = styled.button`
  display: grid;
  place-items: center;
  height: 92px;
  border: 1px solid ${({ $dark }) => ($dark ? '#8195a3' : '#b3c8da')};
  border-right: 0;
  border-radius: 4px 0 0 4px;
  i {
    width: 3px;
    height: 3px;
    border: 1px solid #24425a;
    border-radius: 50%;
  }
`
const Viewport = styled.div`
  flex: 1;
  min-width: 0;
  display: flex;
  background: linear-gradient(#c6dbea, #b0c7df 21%, #849fc2 60%, #5a79a7);
`
const SceneSvg = styled.svg`
  width: 100%;
  flex: 1;
  font-family: Lato, 'Open Sans', sans-serif;
`
